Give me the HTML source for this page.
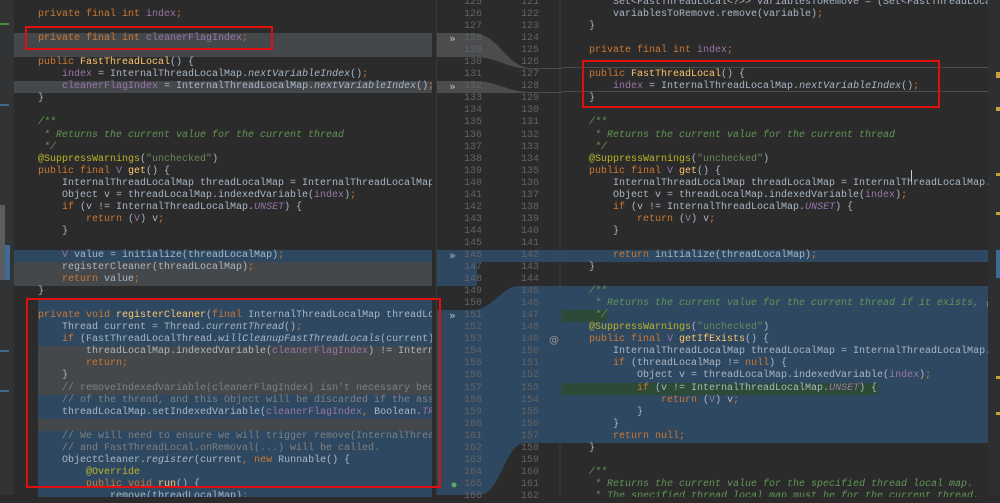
<!DOCTYPE html>
<html><head><meta charset="utf-8"><style>
*{margin:0;padding:0;box-sizing:border-box}
body{width:1000px;height:495px;overflow:hidden;background:#2b2b2b;position:relative;font-family:"Liberation Mono",monospace;font-size:10px;color:#a9b7c6}
.pane{position:absolute;top:-3px;overflow:hidden}
.pane div{height:12.05px;line-height:12.05px;white-space:pre}
.k{color:#cc7832}.f{color:#9876aa}.m{color:#ffc66d}.c{color:#629755;font-style:italic}.a{color:#bbb529}.s{color:#6a8759}.i{font-style:italic}.fi{color:#9876aa;font-style:italic}.g{color:#808080}
.B{background:#2f4861}.G{background:#45484a}.N{background:linear-gradient(90deg,#2d4a36 0,#2d4a36 316px,#2f4861 316px)}
.ln{position:absolute;top:-3px;color:#606366;text-align:right;width:30px}
.ln div{height:12.05px;line-height:12.05px}
.box{position:absolute;border:2px solid #e01010}
</style></head><body>
<!-- left strip -->
<div style="position:absolute;left:0;top:0;width:14px;height:495px;background:#313335"></div>
<div style="position:absolute;left:0;top:205px;width:5px;height:75px;background:#5b5d5e"></div>
<div style="position:absolute;left:5px;top:245px;width:5px;height:35px;background:#3e6a96"></div>
<div style="position:absolute;left:0;top:23px;width:9px;height:2px;background:#4c8a3a"></div>
<div style="position:absolute;left:0;top:104px;width:9px;height:2px;background:#3e6a96"></div>
<div style="position:absolute;left:0;top:350px;width:9px;height:2px;background:#3e6a96"></div>
<div style="position:absolute;left:0;top:390px;width:9px;height:2px;background:#3e6a96"></div>

<div class="pane" style="left:14px;width:418px;height:500px;padding-left:24px">
<div> </div>
<div><span class="k">private final int </span><span class="f">index</span><span class="k">;</span></div>
<div> </div>
<div class="G" style="margin-left:-24px;padding-left:24px"><span class="k">private final int </span><span class="f">cleanerFlagIndex</span><span class="k">;</span></div>
<div class="G" style="margin-left:-24px;padding-left:24px"> </div>
<div><span class="k">public </span><span class="m">FastThreadLocal</span>() {</div>
<div>    <span class="f">index </span>= InternalThreadLocalMap.<span class="i">nextVariableIndex</span>()<span class="k">;</span></div>
<div class="G" style="margin-left:-24px;padding-left:24px">    <span class="f">cleanerFlagIndex </span>= InternalThreadLocalMap.<span class="i">nextVariableIndex</span>()<span class="k">;</span></div>
<div>}</div>
<div> </div>
<div class="c">/**</div>
<div class="c"> * Returns the current value for the current thread</div>
<div class="c"> */</div>
<div><span class="a">@SuppressWarnings</span>(<span class="s">"unchecked"</span>)</div>
<div><span class="k">public final </span><span class="f">V </span><span class="m">get</span>() {</div>
<div>    InternalThreadLocalMap threadLocalMap = InternalThreadLocalMap.getIfSet()<span class="k">;</span></div>
<div>    Object v = threadLocalMap.indexedVariable(<span class="f">index</span>)<span class="k">;</span></div>
<div>    <span class="k">if </span>(v != InternalThreadLocalMap.<span class="fi">UNSET</span>) {</div>
<div>        <span class="k">return </span>(<span class="f">V</span>) v<span class="k">;</span></div>
<div>    }</div>
<div> </div>
<div class="B" style="margin-left:-24px;padding-left:24px">    <span class="f">V </span>value = initialize(threadLocalMap)<span class="k">;</span></div>
<div class="G" style="margin-left:-24px;padding-left:24px">    registerCleaner(threadLocalMap)<span class="k">;</span></div>
<div class="G" style="margin-left:-24px;padding-left:24px">    <span class="k">return </span>value<span class="k">;</span></div>
<div>}</div>
<div class="B"> </div>
<div class="B"><span class="k">private void </span><span class="m">registerCleaner</span>(<span class="k">final </span>InternalThreadLocalMap threadLocalMap) {</div>
<div class="B">    Thread current = Thread.<span class="i">currentThread</span>()<span class="k">;</span></div>
<div class="B">    <span class="k">if </span>(FastThreadLocalThread.<span class="i">willCleanupFastThreadLocals</span>(current) ||</div>
<div class="G">        threadLocalMap.indexedVariable(<span class="f">cleanerFlagIndex</span>) != InternalThreadLocalMap.<span class="fi">UNSET</span>) {</div>
<div class="G">        <span class="k">return;</span></div>
<div class="G">    }</div>
<div class="G"><span class="g">    // removeIndexedVariable(cleanerFlagIndex) isn't necessary because</span></div>
<div class="B"><span class="g">    // of the thread, and this Object will be discarded if the associated</span></div>
<div class="B">    threadLocalMap.setIndexedVariable(<span class="f">cleanerFlagIndex</span><span class="k">, </span>Boolean.<span class="fi">TRUE</span>)<span class="k">;</span></div>
<div class="G"> </div>
<div class="B"><span class="g">    // We will need to ensure we will trigger remove(InternalThreadLocalMap)</span></div>
<div class="B"><span class="g">    // and FastThreadLocal.onRemoval(...) will be called.</span></div>
<div class="B">    ObjectCleaner.<span class="i">register</span>(current<span class="k">, new </span>Runnable() {</div>
<div class="B">        <span class="a">@Override</span></div>
<div class="B">        <span class="k">public void </span><span class="m">run</span>() {</div>
<div class="B">            remove(threadLocalMap)<span class="k">;</span></div>
</div>
<div style="position:absolute;left:436px;top:0;width:1px;height:495px;background:#3a3a3a"></div>

<!-- gutter -->
<svg style="position:absolute;left:437px;top:0" width="125" height="495" viewBox="437 0 125 495">
<rect x="437" y="0" width="125" height="495" fill="#2b2b2b"/>
<path d="M437,33 H472 C500,33 505,68 532,68 H562 V69 H532 C505,69 500,57 472,57 H437 Z" fill="#4a4c4d"/>
<path d="M437,81 H472 C500,81 505,92 532,92 H562 V93 H532 C505,93 500,93 472,93 H437 Z" fill="#4a4c4d"/>
<path d="M437,250 H562 V262 H515 C495,262 490,286 470,286 L562,286 V443 H525 C505,443 500,495 480,495 H437 Z" fill="#2f4861"/>
<path d="M515,262 H562 V286 H520 C500,286 495,310 470,310 H437 V262 C460,262 495,262 515,262 Z" fill="#2b2b2b"/>
<rect x="437" y="262" width="40" height="24" fill="#2f4861"/>
<text x="449" y="42" fill="#bbb" font-size="11" font-family="DejaVu Sans">»</text>
<text x="449" y="90" fill="#bbb" font-size="11" font-family="DejaVu Sans">»</text>
<text x="449" y="259" fill="#bbb" font-size="11" font-family="DejaVu Sans">»</text>
<text x="449" y="319" fill="#bbb" font-size="11" font-family="DejaVu Sans">»</text>
<text x="549" y="343" fill="#999" font-size="10" font-family="DejaVu Sans">@</text>
<line x1="560" y1="0" x2="560" y2="495" stroke="#3c3f41"/>
<circle cx="454" cy="485" r="2.5" fill="#59a869"/>
</svg>
<div class="ln" style="left:452px">
<div>125</div><div>126</div><div>127</div><div>128</div><div>129</div><div>130</div><div>131</div><div>132</div><div>133</div><div>134</div><div>135</div><div>136</div><div>137</div><div>138</div><div>139</div><div>140</div><div>141</div><div>142</div><div>143</div><div>144</div><div>145</div><div>146</div><div>147</div><div>148</div><div>149</div><div>150</div><div>151</div><div>152</div><div>153</div><div>154</div><div>155</div><div>156</div><div>157</div><div>158</div><div>159</div><div>160</div><div>161</div><div>162</div><div>163</div><div>164</div><div>165</div><div>166</div></div>
<div class="ln" style="left:509px">
<div>121</div><div>122</div><div>123</div><div>124</div><div>125</div><div>126</div><div>127</div><div>128</div><div>129</div><div>130</div><div>131</div><div>132</div><div>133</div><div>134</div><div>135</div><div>136</div><div>137</div><div>138</div><div>139</div><div>140</div><div>141</div><div>142</div><div>143</div><div>144</div><div>145</div><div>146</div><div>147</div><div>148</div><div>149</div><div>150</div><div>151</div><div>152</div><div>153</div><div>154</div><div>155</div><div>156</div><div>157</div><div>158</div><div>159</div><div>160</div><div>161</div><div>162</div></div>

<!-- right pane -->
<div class="pane" style="left:562px;width:426px;height:500px;padding-left:27px">
<div>    Set&lt;FastThreadLocal&lt;?&gt;&gt; variablesToRemove = (Set&lt;FastThreadLocal&lt;?&gt;&gt;) v<span class="k">;</span></div>
<div>    variablesToRemove.remove(variable)<span class="k">;</span></div>
<div>}</div>
<div> </div>
<div><span class="k">private final int </span><span class="f">index</span><span class="k">;</span></div>
<div> </div>
<div><span class="k">public </span><span class="m">FastThreadLocal</span>() {</div>
<div>    <span class="f">index </span>= InternalThreadLocalMap.<span class="i">nextVariableIndex</span>()<span class="k">;</span></div>
<div>}</div>
<div> </div>
<div class="c">/**</div>
<div class="c"> * Returns the current value for the current thread</div>
<div class="c"> */</div>
<div><span class="a">@SuppressWarnings</span>(<span class="s">"unchecked"</span>)</div>
<div><span class="k">public final </span><span class="f">V </span><span class="m">get</span>() {</div>
<div>    InternalThreadLocalMap threadLocalMap = InternalThreadLocalMap.getIfSet()<span class="k">;</span></div>
<div>    Object v = threadLocalMap.indexedVariable(<span class="f">index</span>)<span class="k">;</span></div>
<div>    <span class="k">if </span>(v != InternalThreadLocalMap.<span class="fi">UNSET</span>) {</div>
<div>        <span class="k">return </span>(<span class="f">V</span>) v<span class="k">;</span></div>
<div>    }</div>
<div> </div>
<div class="B" style="margin-left:-27px;padding-left:27px">    <span class="k">return </span>initialize(threadLocalMap)<span class="k">;</span></div>
<div>}</div>
<div> </div>
<div class="B" style="margin-left:-27px;padding-left:27px"><span class="c">/**</span></div>
<div class="B" style="margin-left:-27px;padding-left:27px"><span class="c"> * Returns the current value for the current thread if it exists, {@code null} otherwise.</span></div>
<div class="B" style="margin-left:-27px;padding-left:27px;background:linear-gradient(90deg,#2d4a36 0,#2d4a36 45px,#2f4861 45px)"><span class="c"> */</span></div>
<div class="B" style="margin-left:-27px;padding-left:27px"><span class="a">@SuppressWarnings</span>(<span class="s">"unchecked"</span>)</div>
<div class="B" style="margin-left:-27px;padding-left:27px"><span class="k">public final </span><span class="f">V </span><span class="m">getIfExists</span>() {</div>
<div class="B" style="margin-left:-27px;padding-left:27px">    InternalThreadLocalMap threadLocalMap = InternalThreadLocalMap.getIfSet()<span class="k">;</span></div>
<div class="B" style="margin-left:-27px;padding-left:27px">    <span class="k">if </span>(threadLocalMap != <span class="k">null</span>) {</div>
<div class="B" style="margin-left:-27px;padding-left:27px">        Object v = threadLocalMap.indexedVariable(<span class="f">index</span>)<span class="k">;</span></div>
<div class="N" style="margin-left:-27px;padding-left:27px">        <span class="k">if </span>(v != InternalThreadLocalMap.<span class="fi">UNSET</span>) {</div>
<div class="B" style="margin-left:-27px;padding-left:27px">            <span class="k">return </span>(<span class="f">V</span>) v<span class="k">;</span></div>
<div class="B" style="margin-left:-27px;padding-left:27px">        }</div>
<div class="B" style="margin-left:-27px;padding-left:27px">    }</div>
<div class="B" style="margin-left:-27px;padding-left:27px">    <span class="k">return null;</span></div>
<div>}</div>
<div> </div>
<div class="c">/**</div>
<div class="c"> * Returns the current value for the specified thread local map.</div>
<div class="c"> * The specified thread local map must be for the current thread.</div>
</div>
<div style="position:absolute;left:562px;top:67px;width:426px;height:1px;background:#4a4c4d"></div>
<div style="position:absolute;left:562px;top:91px;width:426px;height:1px;background:#4a4c4d"></div>
<!-- right strip -->
<div style="position:absolute;left:988px;top:0;width:12px;height:495px;background:#2d2f30"></div>
<div style="position:absolute;left:996px;top:72px;width:4px;height:6px;background:#c7a23a"></div>
<div style="position:absolute;left:996px;top:107px;width:4px;height:4px;background:#c7a23a"></div>
<div style="position:absolute;left:996px;top:173px;width:4px;height:3px;background:#c7a23a"></div>
<div style="position:absolute;left:996px;top:212px;width:4px;height:3px;background:#c7a23a"></div>
<div style="position:absolute;left:996px;top:250px;width:4px;height:28px;background:#3e6a96"></div>
<div style="position:absolute;left:996px;top:376px;width:4px;height:3px;background:#c7a23a"></div>
<div style="position:absolute;left:996px;top:412px;width:4px;height:3px;background:#c7a23a"></div>
<div style="position:absolute;left:911px;top:170px;width:1px;height:12px;background:#ccc"></div>

<!-- red boxes -->
<div class="box" style="left:25px;top:26px;width:248px;height:24px"></div>
<div class="box" style="left:26px;top:298px;width:415px;height:190px"></div>
<div class="box" style="left:582px;top:60px;width:358px;height:48px"></div>
</body></html>
